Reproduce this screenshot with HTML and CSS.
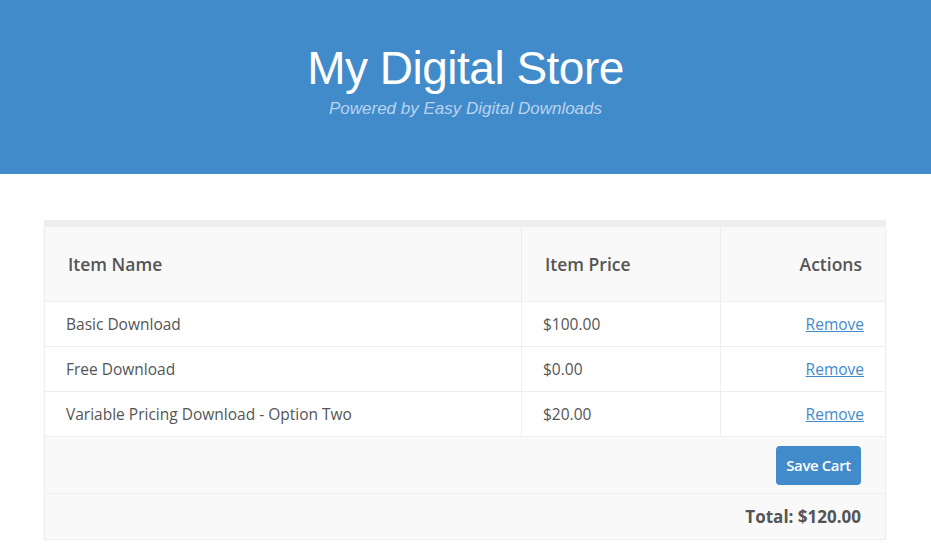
FILE: index.html
```html
<!DOCTYPE html>
<html lang="en">
<head>
    <meta charset="UTF-8">
    <title>My Digital Store</title>
    <link rel="stylesheet" href="styles.css">
</head>
<body>
    <div class="site-header">
        <h1>My Digital Store</h1>
        <p class="tagline">Powered by Easy Digital Downloads</p>
    </div>
    <div class="container">
        <table class="cart">
            <thead>
                <tr>
                    <th class="col-name">Item Name</th>
                    <th class="col-price">Item Price</th>
                    <th class="col-actions">Actions</th>
                </tr>
            </thead>
            <tbody>
                <tr>
                    <td>Basic Download</td>
                    <td>$100.00</td>
                    <td class="actions"><a href="#">Remove</a></td>
                </tr>
                <tr>
                    <td>Free Download</td>
                    <td>$0.00</td>
                    <td class="actions"><a href="#">Remove</a></td>
                </tr>
                <tr>
                    <td>Variable Pricing Download - Option Two</td>
                    <td>$20.00</td>
                    <td class="actions"><a href="#">Remove</a></td>
                </tr>
            </tbody>
            <tfoot>
                <tr class="save-row">
                    <th colspan="3"><button class="button-save">Save Cart</button></th>
                </tr>
                <tr class="total-row">
                    <th colspan="3">Total: $120.00</th>
                </tr>
            </tfoot>
        </table>
    </div>
</body>
</html>
```
FILE: styles.css
```css
* {
    box-sizing: border-box;
}

body {
    margin: 0;
    padding: 0;
    background: #fff;
    font-family: "Open Sans", sans-serif;
    color: #555;
}

.site-header {
    background-color: #428bca;
    height: 174px;
    text-align: center;
    color: #fff;
    padding-top: 42px;
    font-family: "Liberation Sans", Arial, sans-serif;
}

.site-header h1 {
    margin: 0;
    font-size: 46px;
    font-weight: normal;
    line-height: 52px;
    letter-spacing: -0.5px;
}

.tagline {
    margin: 5px 0 0;
    font-size: 17px;
    font-style: italic;
    color: #b9d3ee;
}

.container {
    margin: 46px 45px 0 44px;
}

.cart {
    width: 100%;
    border-collapse: collapse;
    border-top: 7px solid #eee;
    font-size: 15.5px;
    box-shadow: 0 1px 2px rgba(0,0,0,0.06);
}

.cart th, .cart td {
    border: 1px solid #eee;
    text-align: left;
}

.cart thead th {
    background-color: #f9f9f9;
    font-size: 17.5px;
    font-weight: 600;
    height: 78px;
    padding: 0 23px;
}

.cart thead .col-name {
    width: 477px;
}

.cart thead .col-price {
    width: 199px;
}

.cart thead .col-actions {
    text-align: right;
}

.cart tbody td {
    height: 45px;
    padding: 0 21px;
}

.cart td.actions {
    text-align: right;
}

.cart a {
    color: #428bca;
}

.cart tfoot th {
    background-color: #f9f9f9;
    text-align: right;
    padding: 0 24px;
}

.save-row th {
    height: 57px;
}

.total-row th {
    height: 46px;
    font-size: 17px;
    font-weight: 700;
}

.button-save {
    background-color: #428bca;
    color: #fff;
    border: none;
    border-radius: 4px;
    font-family: "Open Sans", sans-serif;
    font-size: 15px;
    font-weight: 600;
    padding: 0 10px;
    height: 39px;
    width: 85px;
    letter-spacing: -0.4px;
    cursor: pointer;
}
```
